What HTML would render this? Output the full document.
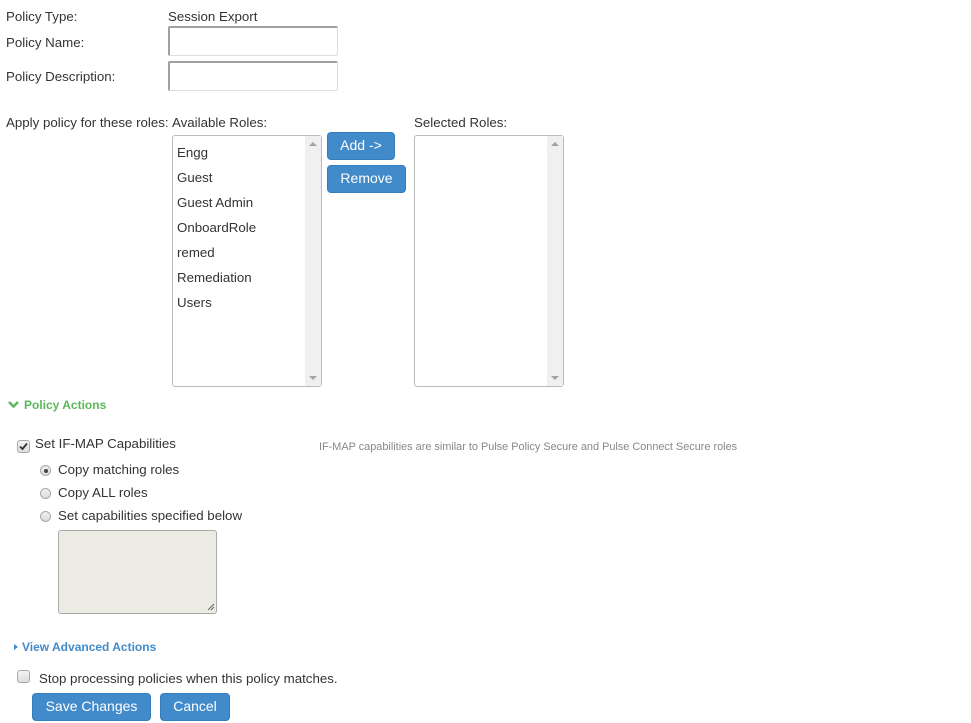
<!DOCTYPE html>
<html><head><style>
body{margin:0;width:971px;height:723px;background:#fff;font-family:"Liberation Sans",Arial,sans-serif;color:#333;font-size:13.3px;position:relative;overflow:hidden}
.a{position:absolute;white-space:nowrap;line-height:16px}
.inp{position:absolute;box-sizing:border-box;border:1px solid #ddd;border-top:2px solid #a0a0a0;border-left:2px solid #a0a0a0;border-radius:2px;background:#fff}
.btn{position:absolute;box-sizing:border-box;background:#428bca;border:1px solid #357ebd;border-radius:4px;color:#fff;font-size:14px;text-align:center;line-height:25px}
.list{position:absolute;box-sizing:border-box;border:1px solid #bbb;border-radius:3px;background:#fff}
.sb{position:absolute;right:0;top:0;bottom:0;width:16px;background:#f0f0f0}
.up,.dn{position:absolute;left:4px;width:0;height:0;border-left:4px solid transparent;border-right:4px solid transparent}
.up{top:6px;border-bottom:4px solid #a3a3a3}.dn{bottom:6px;border-top:4px solid #a3a3a3}
.rad{position:absolute;width:11px;height:11px;border:1px solid #a8a8a8;border-radius:50%;background:linear-gradient(#f0f0f0,#ddd);box-sizing:border-box}
.cb{position:absolute;width:13px;height:13px;border:1px solid #a8a8a8;border-radius:3px;background:linear-gradient(#f4f4f4,#ddd);box-sizing:border-box}
</style></head><body>
<div class="a" style="left:6px;top:9px">Policy Type:</div>
<div class="a" style="left:168px;top:9px">Session Export</div>
<div class="a" style="left:6px;top:35px">Policy Name:</div>
<div class="inp" style="left:168px;top:26px;width:170px;height:30px"></div>
<div class="a" style="left:6px;top:69px">Policy Description:</div>
<div class="inp" style="left:168px;top:61px;width:170px;height:30px"></div>
<div class="a" style="left:6px;top:115px">Apply policy for these roles:</div>
<div class="a" style="left:172px;top:115px">Available Roles:</div>
<div class="a" style="left:414px;top:115px">Selected Roles:</div>
<div class="list" style="left:172px;top:135px;width:150px;height:252px"><div class="sb"><div class="up"></div><div class="dn"></div></div></div>
<div class="a" style="left:177px;top:145px">Engg</div>
<div class="a" style="left:177px;top:170px">Guest</div>
<div class="a" style="left:177px;top:195px">Guest Admin</div>
<div class="a" style="left:177px;top:220px">OnboardRole</div>
<div class="a" style="left:177px;top:245px">remed</div>
<div class="a" style="left:177px;top:270px">Remediation</div>
<div class="a" style="left:177px;top:295px">Users</div>
<div class="btn" style="left:327px;top:132px;width:68px;height:28px">Add -&gt;</div>
<div class="btn" style="left:327px;top:165px;width:79px;height:28px">Remove</div>
<div class="list" style="left:414px;top:135px;width:150px;height:252px"><div class="sb"><div class="up"></div><div class="dn"></div></div></div>
<svg style="position:absolute;left:8px;top:400px" width="11" height="9"><path d="M1 2 L5.5 6.5 L10 2" stroke="#5cb85c" stroke-width="2.5" fill="none"/></svg>
<div class="a" style="left:24px;top:397px;font-size:12px;font-weight:bold;color:#5cb85c">Policy Actions</div>
<div class="cb" style="left:17px;top:440px"></div>
<svg style="position:absolute;left:18px;top:441px" width="11" height="11"><path d="M2 5.5 L4.5 8 L9 2.5" stroke="#333" stroke-width="1.8" fill="none"/></svg>
<div class="a" style="left:35px;top:436px">Set IF-MAP Capabilities</div>
<div class="a" style="left:319px;top:439px;font-size:10.9px;color:#888">IF-MAP capabilities are similar to Pulse Policy Secure and Pulse Connect Secure roles</div>
<div class="rad" style="left:40px;top:465px"><div style="position:absolute;left:2.5px;top:2.5px;width:4px;height:4px;border-radius:50%;background:#444"></div></div>
<div class="a" style="left:58px;top:462px">Copy matching roles</div>
<div class="rad" style="left:40px;top:488px"></div>
<div class="a" style="left:58px;top:485px">Copy ALL roles</div>
<div class="rad" style="left:40px;top:511px"></div>
<div class="a" style="left:58px;top:508px">Set capabilities specified below</div>
<div style="position:absolute;left:58px;top:530px;width:159px;height:84px;box-sizing:border-box;border:1px solid #aaa;border-radius:3px;background:#ebebe4"></div>
<svg style="position:absolute;left:207px;top:603px" width="8" height="8"><path d="M1 7 L7 1 M4 7 L7 4" stroke="#666" stroke-width="1"/></svg>
<div style="position:absolute;left:14px;top:644px;width:0;height:0;border-top:3px solid transparent;border-bottom:3px solid transparent;border-left:4px solid #428bca"></div>
<div class="a" style="left:22px;top:639px;font-size:12px;font-weight:bold;color:#428bca">View Advanced Actions</div>
<div class="cb" style="left:17px;top:670px"></div>
<div class="a" style="left:39px;top:671px">Stop processing policies when this policy matches.</div>
<div class="btn" style="left:32px;top:693px;width:119px;height:28px">Save Changes</div>
<div class="btn" style="left:160px;top:693px;width:70px;height:28px">Cancel</div>
</body></html>
